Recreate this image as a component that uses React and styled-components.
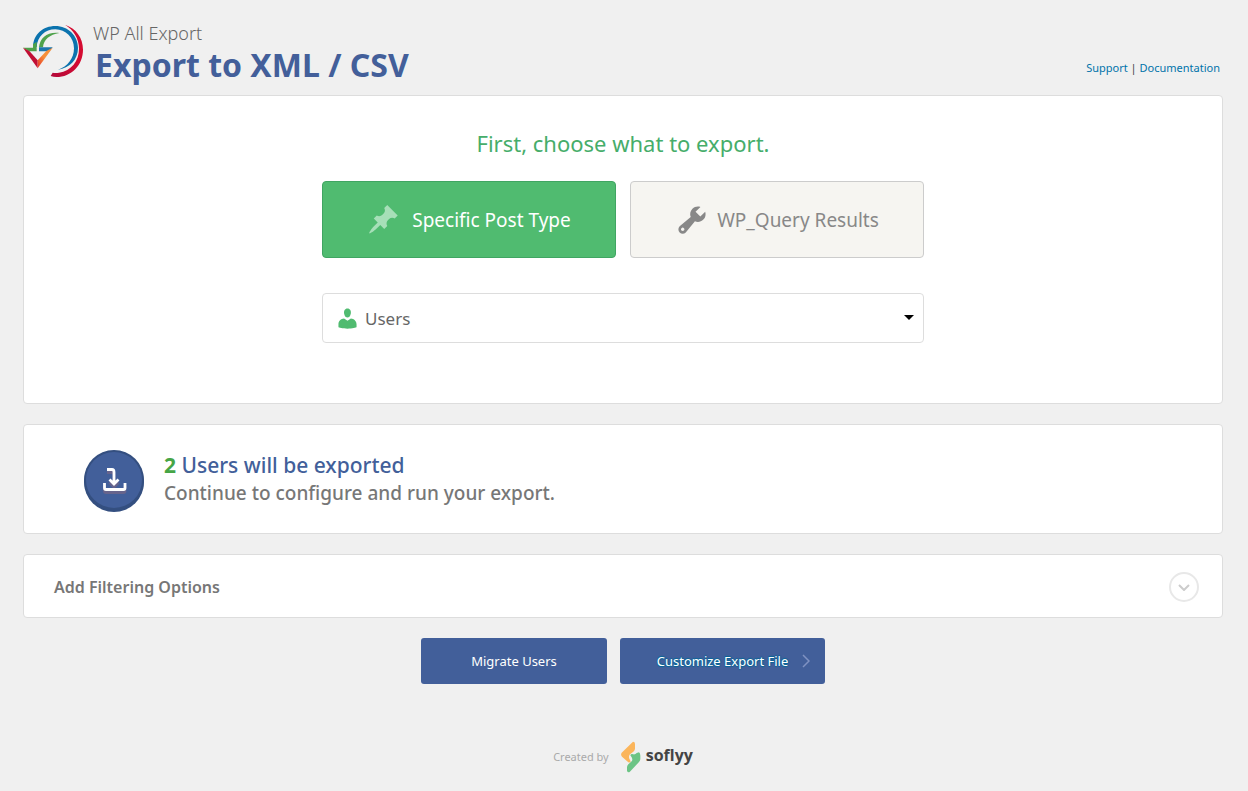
import React from "react";
import styled, { createGlobalStyle } from "styled-components";

const GlobalStyle = createGlobalStyle`
  *, *::before, *::after { box-sizing: border-box; }
  body {
    margin: 0;
    background: #f0f0f0;
    color: #777;
    font-family: "Noto Sans", "Open Sans", sans-serif;
  }
  h1, h2, h3, p { margin: 0; }
  button, select { font-family: inherit; }
`;

const Page = styled.div`
  padding: 24px 25px 16px 23px;
`;

const Header = styled.header`
  display: flex;
  align-items: flex-start;
  height: 71px;
`;

const LogoSlot = styled.div`
  flex: none;
  width: 70px;
  svg { display: block; }
`;

const Titles = styled.div`
  flex: 1;
`;

const ProductName = styled.p`
  font-size: 18px;
  line-height: 18px;
  font-weight: 300;
  color: #666;
`;

const PageTitle = styled.h1`
  padding-left: 2px;
  font-size: 32px;
  line-height: 46px;
  font-weight: 700;
  color: #435f9a;
`;

const HelpLinks = styled.nav`
  padding: 34px 3px 0 0;
  font-size: 11px;
  line-height: 20px;
  color: #444;
  a { color: #0073aa; text-decoration: none; }
`;

const Card = styled.section`
  margin-bottom: 20px;
  background: #fff;
  border: 1px solid #ddd;
  border-radius: 4px;
`;

const ChooseCard = styled(Card)`
  display: flex;
  flex-direction: column;
  align-items: center;
  padding: 31px 20px 60px;
`;

const ChooseTitle = styled.h2`
  font-size: 22px;
  line-height: 32px;
  font-weight: 400;
  color: #46ad6a;
`;

const TypeRow = styled.div`
  display: flex;
  gap: 14px;
  width: 100%;
  max-width: 602px;
  margin-top: 22px;
`;

const TypeButton = styled.button`
  flex: 1;
  display: flex;
  align-items: center;
  justify-content: center;
  gap: ${(p) => (p.$active ? 12 : 8)}px;
  height: 77px;
  padding: 0;
  border: 1px solid ${(p) => (p.$active ? "#40a562" : "#ccc")};
  border-radius: 4px;
  background: ${(p) => (p.$active ? "#50bb70" : "#f6f5f1")};
  color: ${(p) => (p.$active ? "#fff" : "#888")};
  font-size: 19px;
  line-height: 28px;
  svg { color: ${(p) => (p.$active ? "#a7dfb8" : "#888")}; }
`;

const SelectBox = styled.div`
  position: relative;
  width: 100%;
  max-width: 602px;
  margin-top: 35px;
  svg { position: absolute; pointer-events: none; }
`;

const UserMark = styled.svg`
  left: 13px;
  top: 13px;
`;

const Caret = styled.svg`
  right: 10px;
  top: 22px;
`;

const Select = styled.select`
  display: block;
  appearance: none;
  width: 100%;
  height: 50px;
  padding: 0 40px 0 42px;
  border: 1px solid #ddd;
  border-radius: 4px;
  background: #fff;
  color: #666;
  font-size: 17px;
  font-weight: 400;
`;

const ResultCard = styled(Card)`
  display: flex;
  align-items: center;
  gap: 20px;
  height: 110px;
  padding: 4px 60px 0;
`;

const ResultTexts = styled.div`
  padding-bottom: 4px;
`;

const ResultTitle = styled.h2`
  font-size: 21px;
  line-height: 28px;
  font-weight: 500;
  color: #425f9a;
`;

const Count = styled.span`
  color: #46a546;
  font-weight: 700;
`;

const ResultText = styled.p`
  font-size: 19px;
  line-height: 28px;
  font-weight: 500;
  color: #777;
`;

const FilterCard = styled(Card)`
  display: flex;
  align-items: center;
  justify-content: space-between;
  height: 64px;
  padding: 2px 23px 0 30px;
`;

const FilterTitle = styled.h3`
  font-size: 16px;
  line-height: 24px;
  font-weight: 600;
  color: #777;
`;

const ToggleButton = styled.button`
  display: flex;
  align-items: center;
  justify-content: center;
  width: 30px;
  height: 30px;
  padding: 0;
  border: 2px solid #e8e8e8;
  border-radius: 50%;
  background: #fff;
`;

const Actions = styled.div`
  display: flex;
  justify-content: center;
  gap: 13px;
`;

const ActionButton = styled.button`
  display: flex;
  align-items: center;
  justify-content: center;
  gap: 14px;
  width: ${(p) => (p.$wide ? 205 : 186)}px;
  height: 46px;
  padding: ${(p) => (p.$wide ? "0 0 0 22px" : "0")};
  border: 0;
  border-radius: 3px;
  background: #425f9a;
  color: #fff;
  font-size: 13px;
  line-height: 20px;
  text-shadow: ${(p) => (p.$wide ? "0 -1px 1px #006799, 1px 0 1px #006799, 0 1px 1px #006799" : "none")};
`;

const Footer = styled.footer`
  display: flex;
  justify-content: center;
  margin-top: 57px;
`;

const Credit = styled.a`
  display: flex;
  align-items: center;
  color: #aaa;
  font-size: 11px;
  line-height: 32px;
  text-decoration: none;
  svg { margin: 0 5px 0 12px; }
`;

const Brand = styled.span`
  color: #444;
  font-family: "Open Sans", sans-serif;
  font-size: 16px;
  line-height: 28px;
  padding-bottom: 4px;
  font-weight: 700;
`;

function Logo() {
  return (
    <svg width="60" height="54" viewBox="39 27 180 162" aria-hidden="true">
      <defs>
        <linearGradient id="arrowRight" x1="0" y1="1" x2="1" y2="0">
          <stop offset="0.1" stopColor="#e8432b" />
          <stop offset="0.5" stopColor="#f7903a" />
        </linearGradient>
        <linearGradient id="crescent" x1="0" y1="1" x2="1" y2="0">
          <stop offset="0" stopColor="#b3093a" />
          <stop offset="0.6" stopColor="#d40b31" />
        </linearGradient>
      </defs>
      <path d="M165 29C198 40 219 68 219 104C219 150 184 186 139 186Q130 186 122 183L128 173Q136 175 147 173C184 167 207 138 207 101C207 70 191 45 165 29Z" fill="url(#crescent)" />
      <path d="M69 96C70 58 99 33 136 33C174 33 204 62 204 99C204 134 178 160 144 164C173 155 192 130 192 100C192 68 167 43 136 43C105 43 82 65 80 96Z" fill="#0b73ae" />
      <path d="M87 97C90 68 112 50 148 54C119 59 101 73 99 97Z" fill="#4fa24b" />
      <path d="M39 98L69 98L69 88L80 80L80 109L57 109Z" fill="#4fa24b" />
      <path d="M87 97L128 97L118 109L87 109Z" fill="#1d76ad" />
      <path d="M39 98L58 108L83 136L83 160Z" fill="#c10f34" />
      <path d="M83 160L128 98L109 108L83 136Z" fill="url(#arrowRight)" />
    </svg>
  );
}

const pinPath =
  "M10.44 3.02l1.82-1.82 6.36 6.35-1.83 1.82c-1.05-.68-2.48-.57-3.41.36l-.75.75c-.92.93-1.04 2.35-.35 3.41l-1.83 1.82-2.41-2.41-2.8 2.79c-.42.42-3.38 2.71-3.8 2.29s1.86-3.39 2.28-3.81l2.79-2.79L4.1 9.36l1.83-1.82c1.05.69 2.48.57 3.4-.36l.75-.75c.93-.92 1.05-2.35.36-3.41z";
const wrenchPath =
  "M16.68 9.77c-1.34 1.34-3.3 1.67-4.95.99l-5.41 6.52c-.99.99-2.59.99-3.58 0s-.99-2.59 0-3.57l6.52-5.42c-.68-1.65-.35-3.61.99-4.95 1.28-1.28 3.12-1.62 4.72-1.06l-2.89 2.89 2.82 2.82 2.86-2.87c.53 1.58.18 3.39-1.08 4.65zM3.81 16.21c.4.39 1.04.39 1.43 0 .4-.4.4-1.04 0-1.43-.39-.4-1.03-.4-1.43 0-.39.39-.39 1.03 0 1.43z";
const userPath =
  "M10 9.25c-2.27 0-2.73-3.44-2.73-3.44C7 4.02 7.82 2 9.97 2c2.16 0 2.98 2.02 2.71 3.81 0 0-.41 3.44-2.68 3.44zm0 2.57L12.72 10c2.39 0 4.52 2.33 4.52 4.53v2.49s-3.65 1.13-7.24 1.13c-3.65 0-7.24-1.13-7.24-1.13v-2.49c0-2.25 1.94-4.48 4.47-4.48z";

function Glyph({ d, size }) {
  return (
    <svg width={size} height={size} viewBox="0 0 20 20" aria-hidden="true">
      <path d={d} fill="currentColor" />
    </svg>
  );
}

function DownloadBadge() {
  return (
    <svg width="60" height="62" viewBox="0 0 60 62" aria-hidden="true">
      <circle cx="30" cy="32" r="30" fill="#344f80" />
      <circle cx="30" cy="30" r="30" fill="#344f80" />
      <circle cx="30" cy="30" r="28" fill="#425f9a" />
      <g fill="none" strokeWidth="2.8">
        <g stroke="#67648c" transform="translate(0 3)">
          <path d="M23 19.500H28Q30 19.500 30 22V34M25.500 29.500L30 34L34.500 29.500" />
          <path d="M20.500 33V38Q20.500 39.500 22 39.500H39.500Q41 39.500 41 38V33" />
        </g>
        <g stroke="#fff">
          <path d="M23 19.500H28Q30 19.500 30 22V34M25.500 29.500L30 34L34.500 29.500" />
          <path d="M20.500 33V38Q20.500 39.500 22 39.500H39.500Q41 39.500 41 38V33" />
        </g>
      </g>
    </svg>
  );
}

function SoflyyMark() {
  return (
    <svg width="20" height="32" viewBox="243 33 60 96" aria-hidden="true">
      <path d="M279 35Q285 35 285 42V56Q285 61 280 65L270 73Q265 78 268 86L272 94Q271 99 265 97L246 80Q241 74 245 68Z" fill="#fbb55b" />
      <path d="M297 67Q301 70 301 77V87Q301 92 297 96L269 126Q263 129 261 122V112Q261 107 265 103L275 94Q279 89 275 82L271 76Q273 70 280 73Q286 74 290 69Z" fill="#6cc485" />
    </svg>
  );
}

export default function App() {
  return (
    <>
      <GlobalStyle />
      <Page>
        <Header>
          <LogoSlot><Logo /></LogoSlot>
          <Titles>
            <ProductName>WP All Export</ProductName>
            <PageTitle>Export to XML / CSV</PageTitle>
          </Titles>
          <HelpLinks>
            <a href="#support">Support</a> | <a href="#documentation">Documentation</a>
          </HelpLinks>
        </Header>
        <main>
          <ChooseCard>
            <ChooseTitle>First, choose what to export.</ChooseTitle>
            <TypeRow>
              <TypeButton type="button" $active aria-pressed="true">
                <Glyph d={pinPath} size={33} />
                Specific Post Type
              </TypeButton>
              <TypeButton type="button" aria-pressed="false">
                <Glyph d={wrenchPath} size={34} />
                WP_Query Results
              </TypeButton>
            </TypeRow>
            <SelectBox>
              <Select aria-label="Post type" defaultValue="users">
                <option value="users">Users</option>
              </Select>
              <UserMark width="25" height="25" viewBox="0 0 20 20" aria-hidden="true">
                <path d={userPath} fill="#50bb70" />
              </UserMark>
              <Caret width="10" height="5" viewBox="0 0 10 5" aria-hidden="true">
                <path d="M0 0H10L5 5Z" fill="#000" />
              </Caret>
            </SelectBox>
          </ChooseCard>
          <ResultCard>
            <DownloadBadge />
            <ResultTexts>
              <ResultTitle><Count>2</Count> Users will be exported</ResultTitle>
              <ResultText>Continue to configure and run your export.</ResultText>
            </ResultTexts>
          </ResultCard>
          <FilterCard>
            <FilterTitle>Add Filtering Options</FilterTitle>
            <ToggleButton type="button" aria-label="Show filtering options">
              <svg width="12" height="7" viewBox="0 0 12 7" aria-hidden="true">
                <path d="M1 1L6 6L11 1" fill="none" stroke="#ccc" strokeWidth="2" />
              </svg>
            </ToggleButton>
          </FilterCard>
          <Actions>
            <ActionButton type="button">Migrate Users</ActionButton>
            <ActionButton type="button" $wide>
              Customize Export File
              <svg width="8" height="14" viewBox="0 0 8 14" aria-hidden="true">
                <path d="M1 1L7 7L1 13" fill="none" stroke="#7f92c2" strokeWidth="1.5" />
              </svg>
            </ActionButton>
          </Actions>
        </main>
        <Footer>
          <Credit href="#soflyy">
            Created by
            <SoflyyMark />
            <Brand>soflyy</Brand>
          </Credit>
        </Footer>
      </Page>
    </>
  );
}
